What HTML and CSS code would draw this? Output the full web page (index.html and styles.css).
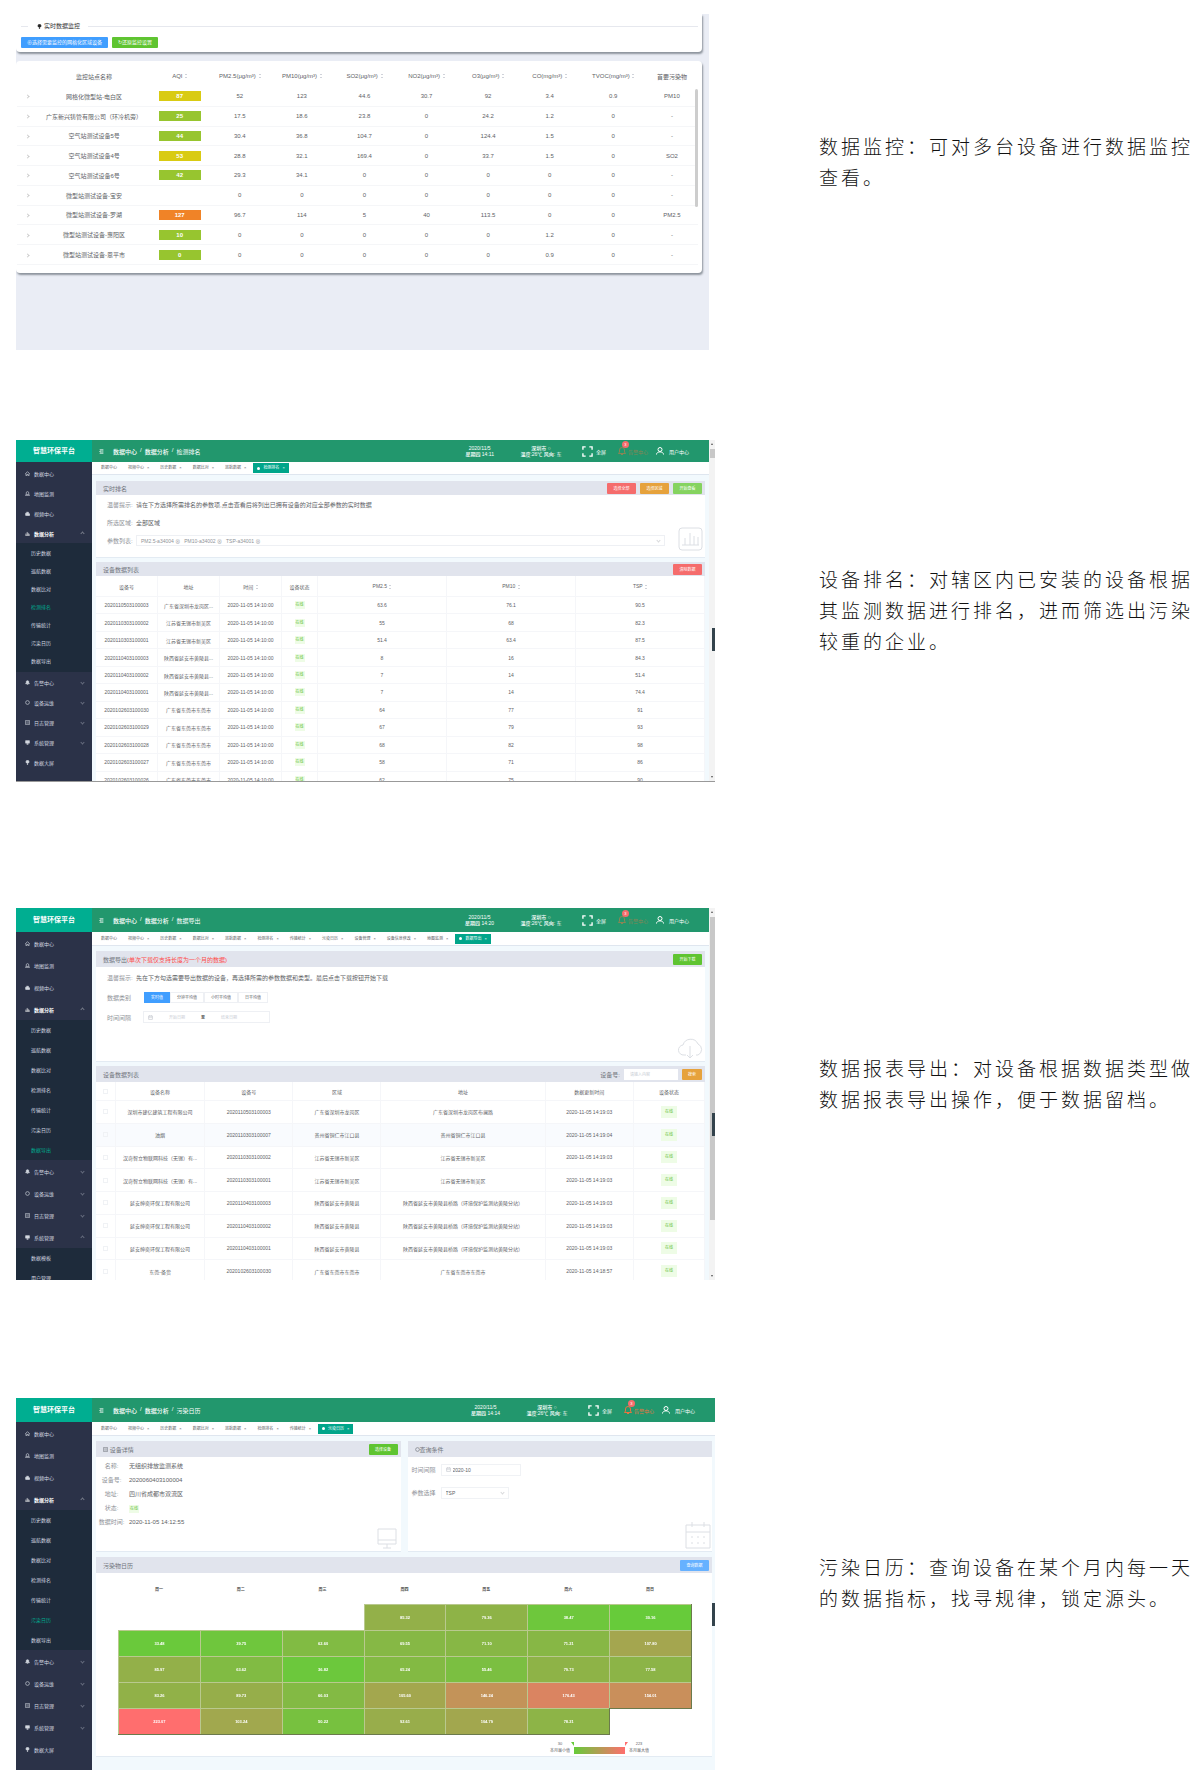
FILE: index.html
```html
<!DOCTYPE html>
<html lang="zh-CN">
<head>
  <meta charset="utf-8"/>
  <title>智慧环保平台</title>
  <link rel="stylesheet" href="styles.css">
</head>
<body>
  <!-- shared icons -->
  <svg class="sprite" aria-hidden="true">
    <symbol id="i-home" viewBox="0 0 16 16"><path d="M1 9 8 2l7 7M3 8v7h3v-4h4v4h3V8"/></symbol>
    <symbol id="i-map" viewBox="0 0 16 16"><path d="M4 11V6a4 4 0 0 1 8 0v5M1 14h14M4 11h8M3 11l-2 3M13 11l2 3"/></symbol>
    <symbol id="i-video" viewBox="0 0 16 16"><path d="M2 7h4v7H2zM6 4h5v10H6zM11 9h4v5h-4zM3 4h2" fill="currentColor"/></symbol>
    <symbol id="i-chart" viewBox="0 0 16 16"><path d="M1 14h14M3 13V8M7 13V3M10 13V6M13 13V9"/></symbol>
    <symbol id="i-bell" viewBox="0 0 16 16"><path d="M2 12h12l-2-3V6a4 4 0 0 0-8 0v3zM6 14h4" fill="currentColor"/></symbol>
    <symbol id="i-ring" viewBox="0 0 16 16"><circle cx="8" cy="8" r="6"/></symbol>
    <symbol id="i-doc" viewBox="0 0 16 16"><path d="M2 1h12v14H2zM5 5h1M8 5h3M5 8h1M8 8h3M5 11h1M8 11h3"/></symbol>
    <symbol id="i-screen" viewBox="0 0 16 16"><path d="M2 2h12v8H2zM8 10v4M5 14h6" fill="currentColor"/></symbol>
    <symbol id="i-pin" viewBox="0 0 16 16"><path d="M3 6a5 5 0 0 1 10 0c0 3-3 4-5 5-2-1-5-2-5-5zM8 11v4M6 14h4" fill="currentColor"/></symbol>
    <symbol id="i-fold" viewBox="0 0 16 16"><path d="M2 2h12M2 14h12M7 6h7M7 10h7M5 5v6L2 8z"/></symbol>
    <symbol id="i-full" viewBox="0 0 24 24"><path d="M2 8V2h6M16 2h6v6M22 16v6h-6M8 22H2v-6" stroke-width="3"/></symbol>
    <symbol id="i-alarm" viewBox="0 0 16 16"><path d="M1 13h14l-2-3V6A5 5 0 0 0 3 6v4zM6 15h4"/></symbol>
    <symbol id="i-user" viewBox="0 0 16 16"><circle cx="8" cy="5" r="4"/><path d="M1 15c0-7 14-7 14 0"/></symbol>
    <symbol id="i-date" viewBox="0 0 16 16"><path d="M2 3h12v11H2zM2 7h12M5 1v3M11 1v3"/></symbol>
  </svg>

  <main class="features">
    <section class="feature">
      <div class="screen monitor">
        <div class="card legend-card">
          <h3 class="legend"><svg class="ico dark"><use href="#i-pin"/></svg>实时数据监控</h3>
          <div class="actions">
            <button class="btn blue wide">⊕选择需要监控的网格化区域设备</button>
            <button class="btn green wide">↻还原监控设置</button>
          </div>
        </div>
        <div class="card table-card">
          <table class="monitor-table">
            <colgroup><col><col><col><col><col><col><col><col><col><col><col></colgroup>
            <thead><tr id="monitorHead"></tr></thead>
            <tbody id="monitorRows"></tbody>
          </table>
          <span class="thin-bar"></span>
        </div>
      </div>
      <p class="caption raised-more">数据监控：可对多台设备进行数据监控查看。</p>
    </section>

    <section class="feature rank-feature">
      <div class="screen app compact">
        <header class="topbar" data-page="检测排名" data-time="14:11"></header>
        <nav class="sidebar" data-active="检测排名"></nav>
        <div class="content">
          <div class="tabs" data-tabs="数据中心,视频中心,历史数据,数据比对,巡航数据,检测排名"></div>
          <div class="panel rank-form">
            <div class="panel-head">
              <h4>实时排名</h4>
              <button class="btn red">选择全部</button>
              <button class="btn orange">选择区域</button>
              <button class="btn light-green">开始查看</button>
            </div>
            <div class="form-row"><span class="label">温馨提示:</span><span>请在下方选择所需排名的参数项,点击查看后将列出已拥有设备的对应全部参数的实时数据</span></div>
            <div class="form-row"><span class="label">所选区域:</span><span>全部区域</span></div>
            <div class="form-row">
              <span class="label">参数列表:</span>
              <div class="multi"><span>PM2.5-a34004 ⊗</span><span>PM10-a34002 ⊗</span><span>TSP-a34001 ⊗</span><i class="chev"></i></div>
            </div>
            <svg class="deco" viewBox="0 0 25 24"><rect x="1" y="1" width="23" height="22" rx="3"/><path d="M4 18h17M7 18v-7M12 18V6M16 18V9M20 18v-8"/></svg>
          </div>
          <div class="panel">
            <div class="panel-head"><h4>设备数据列表</h4><button class="btn red">清除数据</button></div>
            <table class="data rank-table">
              <colgroup><col><col><col><col><col><col><col></colgroup>
              <thead><tr><th>设备号</th><th>地址</th><th>时间 <i class="sort"></i></th><th>设备状态</th><th>PM2.5 <i class="sort"></i></th><th>PM10 <i class="sort"></i></th><th>TSP <i class="sort"></i></th></tr></thead>
              <tbody id="rankRows"></tbody>
            </table>
          </div>
        </div>
        <div class="scrollbar"><i class="up"></i><span class="thumb"></span><i class="down"></i></div>
        <span class="handle"></span>
      </div>
      <p class="caption">设备排名：对辖区内已安装的设备根据其监测数据进行排名，进而筛选出污染较重的企业。</p>
    </section>

    <section class="feature export-feature">
      <div class="screen app">
        <header class="topbar" data-page="数据导出" data-time="14:20"></header>
        <nav class="sidebar" data-active="数据导出" data-open="系统管理"></nav>
        <div class="content">
          <div class="tabs" data-tabs="数据中心,视频中心,历史数据,数据比对,巡航数据,检测排名,传输统计,污染日历,设备管理,设备信息修改,地图监测,数据导出"></div>
          <div class="panel export-form">
            <div class="panel-head">
              <h4>数据导出<em>(单次下载仅支持长度为一个月的数据)</em></h4>
              <button class="btn green">开始下载</button>
            </div>
            <div class="form-row"><span class="label">温馨提示:</span><span>先在下方勾选需要导出数据的设备，再选择所需的参数数据和类型。最后点击下载按钮开始下载</span></div>
            <div class="form-row">
              <span class="label">数据类别</span>
              <div class="segment">
                <button class="on">实时值</button><button>分钟平均值</button><button>小时平均值</button><button>日平均值</button>
              </div>
            </div>
            <div class="form-row">
              <label class="label" for="rangeStart">时间间隔</label>
              <div class="range">
                <svg class="ico"><use href="#i-date"/></svg>
                <input id="rangeStart" placeholder="开始日期"><b>至</b><input aria-label="结束日期" placeholder="结束日期">
              </div>
            </div>
            <svg class="deco" viewBox="0 0 25 22"><path d="M8 18H6a5 5 0 0 1-1-10 8 8 0 0 1 15-1 6 6 0 0 1 0 11h-2M12 9v11M9 18l3 3 3-3"/></svg>
          </div>
          <div class="panel">
            <div class="panel-head">
              <h4>设备数据列表</h4>
              <label for="deviceNo">设备号:</label>
              <input class="search" id="deviceNo" placeholder="请输入内容">
              <button class="btn orange short">搜索</button>
            </div>
            <table class="data export-table">
              <colgroup><col><col><col><col><col><col><col></colgroup>
              <thead><tr><th><input type="checkbox" aria-label="全选"></th><th>设备名称</th><th>设备号</th><th>区域</th><th>地址</th><th>数据更新时间</th><th>设备状态</th></tr></thead>
              <tbody id="exportRows"></tbody>
            </table>
          </div>
        </div>
        <div class="scrollbar long"><i class="up"></i><span class="thumb"></span><i class="down"></i></div>
        <span class="handle"></span>
      </div>
      <p class="caption raised">数据报表导出：对设备根据数据类型做数据报表导出操作，便于数据留档。</p>
    </section>

    <section class="feature calendar-feature">
      <div class="screen app no-scroll">
        <header class="topbar alert" data-page="污染日历" data-time="14:14"></header>
        <nav class="sidebar" data-active="污染日历"></nav>
        <div class="content">
          <div class="tabs" data-tabs="数据中心,视频中心,历史数据,数据比对,巡航数据,检测排名,传输统计,污染日历"></div>
          <div class="pair">
            <div class="panel">
              <div class="panel-head"><h4><svg class="ico"><use href="#i-doc"/></svg> 设备详情</h4><button class="btn green">选择设备</button></div>
              <dl class="details">
                <dt>名称:</dt><dd>无组织排放监测系统</dd>
                <dt>设备号:</dt><dd>2020060403100004</dd>
                <dt>地址:</dt><dd>四川省成都市双流区</dd>
                <dt>状态:</dt><dd><span class="tag">在线</span></dd>
                <dt>数据时间:</dt><dd>2020-11-05 14:12:55</dd>
              </dl>
              <svg class="deco small" viewBox="0 0 20 21"><path d="M1 1h18v15H1zM1 12h18M10 16v4M6 20h8"/></svg>
            </div>
            <div class="panel">
              <div class="panel-head"><h4><svg class="ico"><use href="#i-ring"/></svg>查询条件</h4></div>
              <div class="query">
                <label for="month">时间间隔</label>
                <div class="field"><svg class="ico"><use href="#i-date"/></svg><input id="month" value="2020-10"></div>
              </div>
              <div class="query">
                <label for="param">参数选择</label>
                <div class="field narrow"><select id="param"><option>TSP</option></select><i class="chev"></i></div>
              </div>
              <svg class="deco cal-ico" viewBox="0 0 26 28"><path d="M1 4h24v23H1zM1 11h24M7 1v5M19 1v5M6 16h2M12 16h2M18 16h2M6 22h2M12 22h2M18 22h2"/></svg>
            </div>
          </div>
          <div class="panel calendar-panel">
            <div class="panel-head"><h4>污染物日历</h4><button class="btn light-blue">查询数据</button></div>
            <div class="calendar-wrap">
              <table class="calendar">
                <thead><tr><th>周一</th><th>周二</th><th>周三</th><th>周四</th><th>周五</th><th>周六</th><th>周日</th></tr></thead>
                <tbody id="calendarRows"></tbody>
              </table>
            </div>
            <div class="scale">
              <span>30<br>本月最小值</span>
              <div class="scale-bar"></div>
              <span>223<br>本月最大值</span>
            </div>
          </div>
        </div>
        <span class="handle"></span>
      </div>
      <p class="caption">污染日历：查询设备在某个月内每一天的数据指标，找寻规律，锁定源头。</p>
    </section>
  </main>

  <script>
    const icon = (name, cls = '') => `<svg class="ico ${cls}"><use href="#i-${name}"/></svg>`;
    const online = '<span class="tag">在线</span>';

    // top bars
    document.querySelectorAll('.topbar').forEach(bar => {
      bar.innerHTML = `
        <a class="logo" href="#">智慧环保平台</a>
        ${icon('fold', 'fold')}
        <div class="crumbs"><b>数据中心</b><span>/</span><b>数据分析</b><span>/</span><span>${bar.dataset.page}</span></div>
        <span class="info date">2020/11/5<br><b>星期四</b> ${bar.dataset.time}</span>
        <span class="info weather"><b>深圳市</b> ○<br><b>温度</b>:26℃ <b>风向</b>: 东</span>
        <a class="tool full" href="#">${icon('full', 'big')}全屏</a>
        <a class="tool warn" href="#">${icon('alarm')}告警中心<b>3</b></a>
        <a class="tool user" href="#">${icon('user')}用户中心</a>`;
    });

    // side menus
    const menu = [
      ['home', '数据中心'], ['map', '地图监测'], ['video', '视频中心'],
      ['chart', '数据分析', ['历史数据', '巡航数据', '数据比对', '检测排名', '传输统计', '污染日历', '数据导出']],
      ['bell', '告警中心', []], ['ring', '设备运维', []], ['doc', '日志管理', []],
      ['screen', '系统管理', ['数据模板', '用户管理']], ['pin', '数据大屏']
    ];
    document.querySelectorAll('.sidebar').forEach(side => {
      side.innerHTML = menu.map(([ico, name, subs]) => {
        const open = name === '数据分析' || name === side.dataset.open;
        const arrow = subs ? `<i class="chev ${open ? 'flip' : ''}"></i>` : '';
        const list = open ? `<div class="submenu">${subs.map(s =>
          `<a href="#" class="${s === side.dataset.active ? 'active' : ''}">${s}</a>`).join('')}</div>` : '';
        return `<a class="item ${name === '数据分析' ? 'current' : ''}" href="#">${icon(ico)}${name}${arrow}</a>${list}`;
      }).join('');
    });

    // open page tabs, the last one is the active page
    document.querySelectorAll('.tabs').forEach(el => {
      const names = el.dataset.tabs.split(',');
      el.innerHTML = names.map((n, i) => {
        const last = i === names.length - 1;
        return `<a href="#" class="${last ? 'active' : ''}">${last ? '<i class="dot"></i>' : ''}${n}${i ? '<i class="x">×</i>' : ''}</a>`;
      }).join('');
    });

    // monitor table
    const heads = ['', '监控站点名称', 'AQI', 'PM2.5(μg/m³)', 'PM10(μg/m³)', 'SO2(μg/m³)', 'NO2(μg/m³)', 'O3(μg/m³)', 'CO(mg/m³)', 'TVOC(mg/m³)', '首要污染物'];
    document.getElementById('monitorHead').innerHTML = heads.map((h, i) =>
      `<th>${h}${i > 1 && i < 10 ? ' <i class="sort"></i>' : ''}</th>`).join('');
    const stations = [
      ['网格化微型站-电白区', 87, 52, 123, 44.6, 30.7, 92, 3.4, 0.9, 'PM10'],
      ['广东新兴铸管有限公司（环冷机旁）', 25, 17.5, 18.6, 23.8, 0, 24.2, 1.2, 0, '-'],
      ['空气站测试设备5号', 44, 30.4, 36.8, 104.7, 0, 124.4, 1.5, 0, '-'],
      ['空气站测试设备4号', 53, 28.8, 32.1, 169.4, 0, 33.7, 1.5, 0, 'SO2'],
      ['空气站测试设备6号', 42, 29.3, 34.1, 0, 0, 0, 0, 0, '-'],
      ['微型站测试设备-宝安', '', 0, 0, 0, 0, 0, 0, 0, '-'],
      ['微型站测试设备-罗湖', 127, 96.7, 114, 5, 40, 113.5, 0, 0, 'PM2.5'],
      ['微型站测试设备-惠阳区', 10, 0, 0, 0, 0, 0, 1.2, 0, '-'],
      ['微型站测试设备-恩平市', 0, 0, 0, 0, 0, 0, 0.9, 0, '-']
    ];
    const level = v => v > 100 ? 'bad' : v > 50 ? 'fair' : 'good';
    document.getElementById('monitorRows').innerHTML = stations.map(([name, aqi, ...rest]) =>
      `<tr><td><i class="next"></i></td><td>${name}</td>
        <td>${aqi === '' ? '' : `<span class="aqi ${level(aqi)}">${aqi}</span>`}</td>
        ${rest.map(v => `<td>${v}</td>`).join('')}</tr>`).join('');

    // ranking table
    const ranks = [
      ['2020110503100003', '广东省深圳市龙岗区...', 63.6, 76.1, 90.5],
      ['2020110303100002', '江苏省无锡市新吴区', 55, 68, 82.3],
      ['2020110303100001', '江苏省无锡市新吴区', 51.4, 63.4, 87.5],
      ['2020110403100003', '陕西省延安市黄陵县...', 8, 16, 84.3],
      ['2020110403100002', '陕西省延安市黄陵县...', 7, 14, 51.4],
      ['2020110403100001', '陕西省延安市黄陵县...', 7, 14, 74.4],
      ['2020102603100030', '广东省东莞市东莞市', 64, 77, 91],
      ['2020102603100029', '广东省东莞市东莞市', 67, 79, 93],
      ['2020102603100028', '广东省东莞市东莞市', 68, 82, 98],
      ['2020102603100027', '广东省东莞市东莞市', 58, 71, 86],
      ['2020102603100026', '广东省东莞市东莞市', 62, 75, 90]
    ];
    document.getElementById('rankRows').innerHTML = ranks.map(([id, addr, a, b, c]) =>
      `<tr><td>${id}</td><td>${addr}</td><td>2020-11-05 14:10:00</td><td>${online}</td><td>${a}</td><td>${b}</td><td>${c}</td></tr>`).join('');

    // export table
    const hl = '陕西省延安市黄陵县';
    const devices = [
      ['深圳市建亿建筑工程有限公司', '2020110503100003', '广东省深圳市龙岗区', '广东省深圳市龙岗区布澜路', '19:03'],
      ['油烟', '2020110303100007', '贵州省铜仁市江口县', '贵州省铜仁市江口县', '19:04'],
      ['汉奇智立物联网科技（无锡）有...', '2020110303100002', '江苏省无锡市新吴区', '江苏省无锡市新吴区', '19:03'],
      ['汉奇智立物联网科技（无锡）有...', '2020110303100001', '江苏省无锡市新吴区', '江苏省无锡市新吴区', '19:03'],
      ['延安绅奕环保工程有限公司', '2020110403100003', hl, hl + '桥路（环境保护监测站黄陵分站）', '19:03'],
      ['延安绅奕环保工程有限公司', '2020110403100002', hl, hl + '桥路（环境保护监测站黄陵分站）', '19:03'],
      ['延安绅奕环保工程有限公司', '2020110403100001', hl, hl + '桥路（环境保护监测站黄陵分站）', '19:03'],
      ['东莞-备货', '2020102603100030', '广东省东莞市东莞市', '广东省东莞市东莞市', '18:57']
    ];
    document.getElementById('exportRows').innerHTML = devices.map(([name, id, area, addr, t]) =>
      `<tr><td><input type="checkbox" aria-label="${name}"></td><td>${name}</td><td>${id}</td><td>${area}</td><td>${addr}</td><td>2020-11-05 14:${t}</td><td>${online}</td></tr>`).join('');

    // pollution calendar
    const days = [
      ['', '', '', '85.32', '79.36', '38.47', '30.16'],
      ['33.48', '39.75', '62.60', '69.55', '71.10', '71.21', '107.80'],
      ['85.97', '63.62', '36.82', '65.24', '55.46', '79.73', '77.58'],
      ['83.26', '89.73', '66.03', '105.60', '146.24', '176.43', '154.01'],
      ['223.07', '103.24', '50.22', '92.61', '104.79', '78.21', '']
    ];
    const low = [103, 203, 58], high = [255, 110, 110];
    function shade(v) {
      const t = (v - 30) / 193;
      return `rgb(${low.map((c, i) => Math.round(c + (high[i] - c) * t)).join(',')})`;
    }
    document.getElementById('calendarRows').innerHTML = days.map(row =>
      `<tr>${row.map(v => v ? `<td style="background:${shade(v)}">${v}</td>` : '<td class="empty"></td>').join('')}</tr>`).join('');
  </script>
</body>
</html>
```
FILE: styles.css
```css
* {
  box-sizing: border-box;
}
body {
  margin: 0;
  background: #fff;
  color: #606266;
  font-family: "Liberation Sans", "Noto Sans CJK SC", sans-serif;
  font-size: 5px;
}
a {
  color: inherit;
  text-decoration: none;
}
button,
input,
select {
  font-family: inherit;
  margin: 0;
  padding: 0;
  border: none;
  background: none;
}
h3,
h4 {
  margin: 0;
  font-weight: normal;
}
table {
  width: 100%;
  table-layout: fixed;
  border-collapse: separate;
  border-spacing: 0;
}
th,
td {
  padding: 0;
  text-align: center;
  white-space: nowrap;
}
.sprite {
  display: none;
}
.ico {
  width: 5px;
  height: 5px;
  fill: none;
  stroke: currentColor;
  stroke-width: 2;
  flex: none;
}
.ico.big {
  width: 11px;
  height: 11px;
}

/* page */
.features {
  padding: 14px 6px 9px 16px;
}
.feature {
  display: grid;
  grid-template-columns: minmax(0, 1fr) 375px;
  column-gap: 104px;
  align-items: center;
}
.rank-feature {
  margin-top: 90px;
}
.export-feature {
  margin-top: 126px;
}
.calendar-feature {
  margin-top: 118px;
}
.caption {
  margin: 0;
  padding-bottom: 4px;
  color: #111;
  font-family: "Noto Sans CJK SC", sans-serif;
  font-size: 19px;
  font-weight: 300;
  line-height: 31px;
  letter-spacing: 3px;
}
.caption.raised {
  padding-bottom: 22px;
}
.caption.raised-more {
  padding-bottom: 42px;
}
.screen {
  position: relative;
  overflow: hidden;
}

/* buttons */
.btn {
  width: 29px;
  height: 11px;
  border-radius: 1px;
  color: #fff;
  font-size: 4px;
  line-height: 11px;
  white-space: nowrap;
}
.btn.wide {
  width: auto;
  padding: 0 6px;
  font-size: 5px;
}
.btn.short {
  width: 20px;
}
.blue { background: #409eff; }
.light-blue { background: #66b1ff; }
.green { background: #5fc431; }
.light-green { background: #85d35f; }
.red { background: #f56c6c; }
.orange { background: #e6a23c; }

.sort {
  display: inline-block;
  width: 2px;
  height: 4px;
  margin-left: 1px;
  border-top: 1px solid #d0d3da;
  border-bottom: 1px solid #d0d3da;
  vertical-align: middle;
}
.chev {
  width: 3px;
  height: 3px;
  margin-left: auto;
  border-right: 1px solid currentColor;
  border-bottom: 1px solid currentColor;
  opacity: 0.35;
  transform: rotate(45deg);
}
.chev.flip {
  transform: rotate(225deg);
}
.tag {
  display: inline-block;
  padding: 0 1px;
  background: #eefce6;
  color: #67c23a;
  font-size: 4px;
  line-height: 8px;
}

/* monitor */
.monitor {
  height: 336px;
  margin-right: 6px;
  background: #eaedf5;
}
.card {
  position: relative;
  margin-right: 7px;
  background: #fff;
  border-radius: 4px;
  box-shadow: 1px 2px 2px #8d949c;
}
.legend-card {
  height: 38px;
  padding: 8px 4px 0 5px;
  border-radius: 0 0 4px 4px;
}
.legend {
  display: flex;
  align-items: center;
  gap: 2px;
  color: #333;
  font-size: 6px;
  line-height: 9px;
}
.legend::before,
.legend::after {
  content: "";
  height: 1px;
  background: #e6e8ee;
}
.legend::before {
  width: 7px;
  margin-right: 7px;
}
.legend::after {
  flex: 1;
  margin-left: 6px;
}
.legend .ico {
  color: #222;
}
.actions {
  display: flex;
  gap: 4px;
  margin-top: 6px;
}
.table-card {
  margin-top: 9px;
  padding: 4px 4px 8px 1px;
}
.monitor-table {
  height: 200px;
  font-size: 6px;
}
.monitor-table col:nth-child(1) { width: 21px; }
.monitor-table col:nth-child(2) { width: 112px; }
.monitor-table col:nth-child(3) { width: 59px; }
.monitor-table col:nth-child(4) { width: 61px; }
.monitor-table col:nth-child(5) { width: 63px; }
.monitor-table col:nth-child(6) { width: 62px; }
.monitor-table col:nth-child(7) { width: 62px; }
.monitor-table col:nth-child(8) { width: 61px; }
.monitor-table col:nth-child(9) { width: 62px; }
.monitor-table col:nth-child(10) { width: 65px; }
.monitor-table col:nth-child(11) { width: 52px; }
.monitor-table th {
  height: 22px;
  font-weight: normal;
}
.monitor-table td {
  height: 19px;
  border-bottom: 1px solid #f5f6f8;
}
.next {
  display: inline-block;
  width: 3px;
  height: 3px;
  border-top: 1px solid #ccc;
  border-right: 1px solid #ccc;
  transform: rotate(45deg);
}
.aqi {
  display: block;
  width: 42px;
  margin: 0 auto;
  color: #fff;
  font-weight: bold;
  line-height: 10px;
}
.good { background: #97c52f; }
.fair { background: #d9cb13; }
.bad { background: #f08327; }
.thin-bar {
  position: absolute;
  top: 28px;
  right: 4px;
  width: 3px;
  height: 118px;
  border-radius: 2px;
  background: #cdcdcd;
}

/* platform pages */
.app {
  --nav-item: 22px;
  --sub-item: 20px;
  --bar: 24px;
  --tabs: 14px;
  --head: 16px;
  height: 372px;
  display: grid;
  grid-template-columns: 76px minmax(0, 1fr) 6px;
  grid-template-rows: var(--bar) minmax(0, 1fr);
  background: #f2f9fd;
}
.app.compact {
  --nav-item: 20px;
  --sub-item: 18px;
  --bar: 22px;
  --tabs: 13px;
  --head: 14px;
  height: 342px;
  border-bottom: 1px solid #999;
}
.app.no-scroll {
  grid-template-columns: 76px minmax(0, 1fr);
}
.topbar {
  grid-column: 1 / 3;
  display: flex;
  align-items: center;
  background: #22976d;
  color: #fff;
}
.logo {
  width: 76px;
  line-height: var(--bar);
  background: #00ae91;
  font-size: 7px;
  font-weight: bold;
  text-align: center;
}
.fold {
  margin: 0 9px 0 7px;
}
.crumbs {
  flex: 1;
  display: flex;
  gap: 3px;
  font-size: 6px;
}
.topbar b {
  font-weight: 500;
}
.info {
  line-height: 6px;
  text-align: center;
  white-space: nowrap;
}
.weather {
  width: 44px;
  margin: 0 19px 0 25px;
}
.tool {
  position: relative;
  display: flex;
  align-items: center;
  gap: 3px;
  white-space: nowrap;
}
.warn {
  margin: 0 8px 0 12px;
  gap: 2px;
  color: #8a8455;
}
.alert .warn {
  color: #e8743f;
}
.warn .ico,
.user .ico {
  width: 8px;
  height: 8px;
}
.warn b {
  position: absolute;
  top: -6px;
  left: 4px;
  width: 7px;
  height: 7px;
  border-radius: 50%;
  background: #f56c6c;
  color: #fff;
  font-size: 4px;
  line-height: 7px;
  text-align: center;
}
.user {
  gap: 5px;
  margin-right: 20px;
}
.sidebar {
  min-height: 0;
  overflow: hidden;
  background: #2b3248;
  color: #d3d8e0;
}
.compact .sidebar {
  padding-top: 1px;
}
.item {
  display: flex;
  align-items: center;
  gap: 4px;
  height: var(--nav-item);
  padding: 0 8px 0 9px;
}
.item.current {
  color: #fff;
  font-weight: bold;
}
.submenu {
  background: #1e2b3b;
}
.compact .submenu {
  padding: 1px 0 2px;
}
.submenu a {
  display: block;
  padding-left: 15px;
  line-height: var(--sub-item);
}
.submenu .active {
  color: #00ae91;
}
.content {
  min-width: 0;
  min-height: 0;
  overflow: hidden;
}
.no-scroll .content {
  padding-right: 3px;
}
.tabs {
  display: flex;
  align-items: center;
  gap: 3px;
  height: var(--tabs);
  padding-left: 5px;
  background: #fff;
  border-bottom: 1px solid #dfe6ef;
  font-size: 4px;
  white-space: nowrap;
}
.no-scroll .tabs {
  margin-right: -3px;
}
.tabs a {
  display: flex;
  align-items: center;
  gap: 3px;
  padding: 0 4px;
  line-height: 10px;
}
.tabs i {
  font-style: normal;
}
.tabs .active {
  background: #00a58a;
  color: #fff;
}
.dot {
  width: 3px;
  height: 3px;
  border-radius: 50%;
  background: #fff;
}
.panel {
  position: relative;
  margin: 4px 4px 0;
  background: #fff;
  border-bottom: 1px solid #e3ebf3;
}
.no-scroll .panel {
  margin-right: 0;
}
.tabs + .panel {
  margin-top: 5px;
}
.compact .tabs + .panel {
  margin-top: 6px;
}
.panel-head {
  display: flex;
  align-items: center;
  gap: 4px;
  height: var(--head);
  padding: 0 3px 0 7px;
  background: #e1e4ed;
  color: #70747c;
  font-size: 6px;
}
.panel-head h4 {
  flex: 1;
  font-size: 6px;
}
.panel-head em {
  color: #ff4a4a;
  font-style: normal;
}
.search {
  width: 54px;
  height: 11px;
  padding: 0 6px;
  background: #fff;
  font-size: 4px;
}
::placeholder {
  color: #c8ccd4;
}
.form-row {
  display: flex;
  align-items: center;
  height: 20px;
  padding-left: 11px;
  font-size: 6px;
}
.label {
  width: 29px;
  color: #909399;
}
.rank-form {
  height: 77px;
}
.rank-form .form-row {
  height: 18px;
}
.export-form {
  height: 111px;
}
.multi {
  display: flex;
  align-items: center;
  flex: 1;
  gap: 4px;
  height: 11px;
  margin-right: 40px;
  padding: 0 4px;
  border: 1px solid #eef0f4;
  color: #909399;
  font-size: 5px;
}
.deco {
  position: absolute;
  right: 2px;
  bottom: 6px;
  width: 25px;
  height: 24px;
  fill: none;
  stroke: #dcdfe4;
}
.export-form .deco {
  bottom: 1px;
}
.segment {
  display: flex;
  margin-left: 8px;
}
.segment button {
  height: 11px;
  padding: 0 6px;
  border: 1px solid #eef0f4;
  color: #606266;
  font-size: 4px;
  line-height: 9px;
}
.segment .on {
  background: #409eff;
  border-color: #409eff;
  color: #fff;
}
.range {
  display: flex;
  align-items: center;
  width: 127px;
  height: 12px;
  margin-left: 7px;
  padding-left: 4px;
  border: 1px solid #eef0f4;
  color: #c0c4cc;
}
.range input {
  width: 48px;
  font-size: 4px;
  text-align: center;
}
.range b {
  color: #555;
  font-size: 4px;
}

.data {
  font-size: 5px;
}
.data th {
  font-weight: normal;
}
.data th,
.data td {
  border-right: 1px solid #f5f6f9;
  border-bottom: 1px solid #f5f6f9;
}
.data input {
  appearance: none;
  display: block;
  width: 5px;
  height: 5px;
  margin: 0 auto;
  border: 1px solid #f0f2f5;
}
.rank-table {
  height: 213px;
}
.rank-table th { height: 21px; }
.rank-table td { height: 17px; }
.rank-table col:nth-child(-n+3) { width: 62px; }
.rank-table col:nth-child(4) { width: 36px; }
.rank-table col:nth-child(n+5) { width: 129px; }
.export-table {
  height: 201px;
}
.export-table th { height: 19px; }
.export-table td { height: 22px; }
.export-table tbody tr:nth-child(2) td { background: #f9fbfe; }
.export-table col:nth-child(1) { width: 20px; }
.export-table col:nth-child(2) { width: 89px; }
.export-table col:nth-child(3) { width: 88px; }
.export-table col:nth-child(4) { width: 88px; }
.export-table col:nth-child(5) { width: 164px; }
.export-table col:nth-child(6) { width: 88px; }
.export-table col:nth-child(7) { width: 71px; }
.export-table .tag {
  padding: 0 4px;
  line-height: 12px;
}

.scrollbar {
  grid-column: 3;
  grid-row: 1 / 3;
  display: flex;
  flex-direction: column;
  align-items: center;
  background: #f3f3f3;
}
.thumb {
  width: 5px;
  height: 9px;
  margin: 2px 0 auto;
  background: #c8c8c8;
}
.long .thumb {
  height: 303px;
}
.up,
.down {
  margin: 2px 0;
  border: 1px solid transparent;
}
.up {
  border-bottom: 2px solid #555;
}
.down {
  border-top: 2px solid #555;
}
.handle {
  position: absolute;
  top: 55%;
  right: 0;
  width: 3px;
  height: 23px;
  background: #33434c;
}

/* calendar page */
.pair {
  display: grid;
  grid-template-columns: 1fr 1fr;
  gap: 7px;
  margin: 5px 0 0 4px;
}
.pair .panel {
  height: 111px;
  margin: 0;
}
.details {
  display: grid;
  grid-template-columns: 29px 1fr;
  column-gap: 4px;
  margin: 2px 0 0;
  font-size: 6px;
  line-height: 14px;
}
.details dt {
  padding-left: 2px;
  color: #909399;
  text-align: center;
}
.details dd {
  margin: 0;
}
.deco.small {
  right: 4px;
  bottom: 2px;
  width: 20px;
  height: 21px;
}
.deco.cal-ico {
  right: 1px;
  bottom: 2px;
  width: 26px;
  height: 28px;
}
.query {
  display: flex;
  align-items: center;
  gap: 5px;
  height: 23px;
  padding-left: 4px;
  color: #909399;
  font-size: 6px;
}
.panel-head + .query {
  margin-top: 1px;
}
.field {
  display: flex;
  align-items: center;
  gap: 2px;
  width: 80px;
  height: 12px;
  padding: 0 4px;
  border: 1px solid #f0f2f5;
}
.field .ico {
  color: #c0c4cc;
}
.field.narrow {
  width: 68px;
}
.field input,
.field select {
  width: 50px;
  appearance: none;
  color: #606266;
  font-size: 5px;
}
.calendar-panel {
  margin-top: 5px;
  padding-bottom: 2px;
}
.calendar-wrap {
  padding: 0 21px 0 22px;
}
.calendar tbody {
  filter: drop-shadow(1px 0 0 #6b7a4c) drop-shadow(0 1px 0 #6b7a4c);
}
.calendar th {
  height: 31px;
  color: #444;
  font-size: 4px;
}
.calendar td {
  height: 26px;
  border-top: 1px solid #b9c98e;
  border-left: 1px solid #b9c98e;
  color: #fff;
  font-size: 4px;
  font-weight: bold;
}
.calendar .empty {
  border: none;
}
.scale {
  display: flex;
  align-items: flex-end;
  justify-content: flex-end;
  gap: 4px;
  margin-right: 63px;
  padding-top: 6px;
  font-size: 4px;
  line-height: 7px;
  text-align: center;
}
.scale-bar {
  position: relative;
  width: 51px;
  height: 7px;
  background: linear-gradient(to right, #67cb3a, #ff6e6e);
}
.scale-bar::before,
.scale-bar::after {
  content: "";
  position: absolute;
  top: -5px;
  border-top: 4px solid #67cb3a;
}
.scale-bar::before {
  left: -3px;
  border-left: 3px solid transparent;
}
.scale-bar::after {
  right: -3px;
  border-top-color: #ff6e6e;
  border-right: 3px solid transparent;
}
```
